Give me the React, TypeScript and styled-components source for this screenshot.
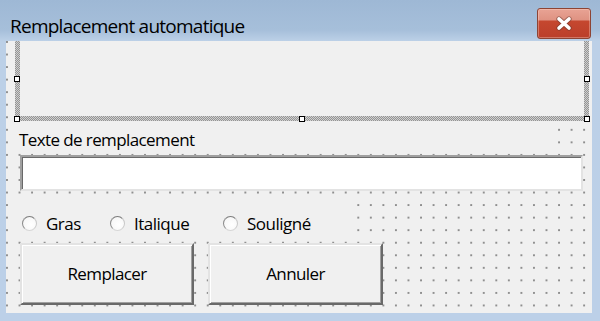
import React from "react"
import styled, { createGlobalStyle } from "styled-components"

const GlobalStyle = createGlobalStyle`
  html, body {
    margin: 0;
    padding: 0;
    background: #a3bcd8;
  }
  * {
    box-sizing: border-box;
  }
`

const Window = styled.div`
  width: 600px;
  height: 321px;
  display: flex;
  flex-direction: column;
  overflow: hidden;
  background: linear-gradient(#9eb8d5 0, #a6bfda 30px, #bcd0e7 41px, #bcd0e8 100%);
  font-family: "Open Sans", "Noto Sans", sans-serif;
  color: #000;
`

const TitleBar = styled.div`
  height: 41px;
  flex-shrink: 0;
  display: flex;
  justify-content: space-between;
  align-items: flex-start;
  padding: 0 9px 0 10px;
`

const Title = styled.div`
  font-size: 19px;
  line-height: 26px;
  margin-top: 13px;
  letter-spacing: -0.75px;
`

const CloseButton = styled.div`
  width: 54px;
  height: 31px;
  margin-top: 8px;
  border: 1px solid #8d4434;
  border-radius: 3px;
  background: linear-gradient(#e8a394 0, #df9282 11px, #c5472f 12px, #bb3f2a 100%);
  box-shadow: inset 0 0 0 1px rgba(255, 220, 210, 0.35);
  display: flex;
  align-items: center;
  justify-content: center;
`

const Body = styled.div`
  flex: 1;
  display: flex;
  padding: 0 8px 8px 6px;
`

const Client = styled.div`
  flex: 1;
  display: flex;
  flex-direction: column;
  background-color: #f0f0f0;
  background-image: radial-gradient(circle at 1px 1px, #8e8e8e 0.7px, transparent 1.3px);
  background-size: 12.55px 12.55px;
`

// selected frame: hatched selection border on the sides and bottom
const Frame = styled.div`
  position: relative;
  height: 80px;
  margin: 0 3px 0 9px;
  padding: 0 5px 5px 5px;
  display: flex;
  background: repeating-conic-gradient(#949494 0 25%, #cfcfcf 0 50%) 0 0 / 2px 2px;
`

const FrameInner = styled.div`
  flex: 1;
  background: #f0f0f0;
`

const Handle = styled.span<{ $x: number; $y: number }>`
  position: absolute;
  width: 6px;
  height: 6px;
  left: ${(p) => p.$x}px;
  top: ${(p) => p.$y}px;
  background: #fff;
  border: 1px solid #000;
`

const Label = styled.div`
  width: 541px;
  height: 28px;
  margin: 1px 0 0 9px;
  padding: 6px 0 0 4px;
  background: #f0f0f0;
  font-size: 17px;
  line-height: 24px;
  letter-spacing: -0.6px;
`

const TextBox = styled.div`
  width: 563px;
  height: 36px;
  margin: 5px 0 0 14px;
  background: #fff;
  border-style: solid;
  border-width: 2px;
  border-color: #a0a0a0 #e3e3e3 #e3e3e3 #a0a0a0;
  box-shadow: inset 1px 1px 0 #696969;
`

const Options = styled.div`
  display: flex;
  align-items: center;
  width: 340px;
  height: 42px;
  margin: 7px 0 0 9px;
  padding: 8px 0 0 7px;
  background: #f0f0f0;
`

const Option = styled.label<{ $w: number }>`
  display: flex;
  align-items: center;
  gap: 9px;
  width: ${(p) => p.$w}px;
  font-size: 17px;
  letter-spacing: -0.5px;
`

const Radio = styled.span`
  width: 15px;
  height: 15px;
  flex-shrink: 0;
  border-radius: 50%;
  background: radial-gradient(circle at 60% 60%, #ffffff 0, #f4f4f4 100%);
  border: 1px solid;
  border-color: #7b7b7b #c9c9c9 #d6d6d6 #8a8a8a;
`

const Buttons = styled.div`
  display: flex;
  gap: 14px;
  margin: 3px 0 0 14px;
`

const Button = styled.div<{ $w: number }>`
  width: ${(p) => p.$w}px;
  height: 62px;
  display: flex;
  align-items: center;
  justify-content: center;
  background: #f0f0f0;
  border-style: solid;
  border-width: 2px;
  border-color: #e3e3e3 #696969 #696969 #e3e3e3;
  box-shadow: inset 1px 1px 0 #fff, inset -1px -1px 0 #a0a0a0;
  font-size: 17px;
  letter-spacing: -0.6px;
  padding-bottom: 1px;
`

const CloseIcon = () => (
  <svg width="18" height="15" viewBox="0 0 18 15">
    <path d="M4 3 L14 12 M14 3 L4 12" stroke="#6b3a30" strokeWidth="5.4" strokeLinecap="round" opacity="0.55" />
    <path d="M4 3 L14 12 M14 3 L4 12" stroke="#ffffff" strokeWidth="3.6" strokeLinecap="round" />
  </svg>
)

export default function App() {
  return (
    <Window>
      <GlobalStyle />
      <TitleBar>
        <Title>Remplacement automatique</Title>
        <CloseButton>
          <CloseIcon />
        </CloseButton>
      </TitleBar>
      <Body>
        <Client>
          <Frame>
            <FrameInner />
            <Handle $x={-1} $y={35} />
            <Handle $x={-1} $y={75} />
            <Handle $x={284} $y={75} />
            <Handle $x={569} $y={75} />
            <Handle $x={569} $y={35} />
          </Frame>
          <Label>Texte de remplacement</Label>
          <TextBox />
          <Options>
            <Option $w={88}>
              <Radio />
              Gras
            </Option>
            <Option $w={113}>
              <Radio />
              Italique
            </Option>
            <Option $w={120}>
              <Radio />
              Souligné
            </Option>
          </Options>
          <Buttons>
            <Button $w={174}>Remplacer</Button>
            <Button $w={175}>Annuler</Button>
          </Buttons>
        </Client>
      </Body>
    </Window>
  )
}
